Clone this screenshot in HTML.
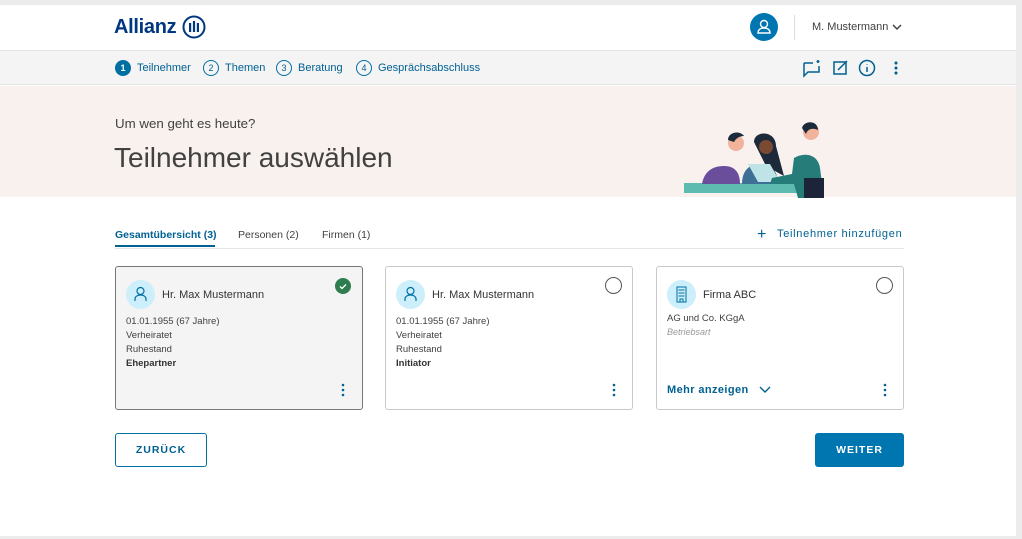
<!DOCTYPE html><html><head><meta charset="utf-8"><style>
*{margin:0;padding:0;box-sizing:border-box}
body{width:1022px;height:539px;background:#ececec;font-family:"Liberation Sans",sans-serif;position:relative;overflow:hidden;color:#333}
.a{position:absolute}
.t{position:absolute;white-space:nowrap;line-height:1}
.card{position:absolute;top:266px;height:144px;width:248px;border:1px solid #c9c9c9;border-radius:3px;background:#fff}
.av{position:absolute;left:10px;top:13px;width:29px;height:29px;border-radius:50%;background:#cdeefb}
.sm{font-size:9.5px;color:#414141}
.blue{color:#006192}
.btn{display:flex;align-items:center;justify-content:center;font-size:10.5px;font-weight:bold;letter-spacing:1px;border-radius:3px}
</style></head><body>
<div class="a" style="left:0;top:5px;width:1016px;height:531px;background:#fff"></div>
<div class="a" style="left:0;top:50px;width:1016px;height:35px;background:#f4f4f4;border-top:1px solid #e2e2e2;border-bottom:1px solid #e2e2e2"></div>
<div class="a" style="left:0;top:86px;width:1016px;height:111px;background:#f8f1ee"></div>
<div class="t" style="left:114px;top:17px;font-size:20px;font-weight:bold;color:#003781;letter-spacing:-0.3px">Allianz</div>
<svg class="a" style="left:182px;top:15px" width="24" height="24" viewBox="0 0 24 24"><circle cx="12" cy="12" r="10.5" fill="none" stroke="#003781" stroke-width="2"/><rect x="7" y="8" width="2.2" height="9" fill="#003781"/><rect x="10.9" y="6" width="2.2" height="11" fill="#003781"/><rect x="14.8" y="8" width="2.2" height="9" fill="#003781"/></svg>
<div class="a" style="left:750px;top:13px;width:28px;height:28px;border-radius:50%;background:#0076b0"></div>
<svg class="a" style="left:750px;top:13px" width="28" height="28"><circle cx="14" cy="11" r="3.5" fill="none" stroke="#fff" stroke-width="1.4"/><path d="M8 20c0-3.5 2.7-5 6-5s6 1.5 6 5z" fill="none" stroke="#fff" stroke-width="1.4"/></svg>
<div class="a" style="left:794px;top:15px;width:1px;height:25px;background:#ddd"></div>
<div class="t" style="left:812px;top:22px;font-size:11px;color:#414141">M. Mustermann</div>
<svg class="a" style="left:892px;top:23px" width="10" height="8"><path d="M1 2l4 4 4-4" fill="none" stroke="#414141" stroke-width="1.5"/></svg>
<!-- steps -->
<div class="a" style="left:115px;top:60px;width:16px;height:16px;border-radius:50%;background:#0070a3;color:#fff;font-size:9px;font-weight:bold;text-align:center;line-height:16px">1</div>
<div class="t blue" style="left:137px;top:63px;font-size:11px">Teilnehmer</div>
<div class="a blue" style="left:203px;top:60px;width:16px;height:16px;border-radius:50%;border:1.3px solid #0070a3;font-size:9px;text-align:center;line-height:14px">2</div>
<div class="t blue" style="left:225px;top:63px;font-size:11px">Themen</div>
<div class="a blue" style="left:276px;top:60px;width:16px;height:16px;border-radius:50%;border:1.3px solid #0070a3;font-size:9px;text-align:center;line-height:14px">3</div>
<div class="t blue" style="left:298px;top:63px;font-size:11px">Beratung</div>
<div class="a blue" style="left:356px;top:60px;width:16px;height:16px;border-radius:50%;border:1.3px solid #0070a3;font-size:9px;text-align:center;line-height:14px">4</div>
<div class="t blue" style="left:378px;top:63px;font-size:11px">Gesprächsabschluss</div>
<svg class="a" style="left:802px;top:59px" width="100" height="20" fill="none" stroke="#006192" stroke-width="1.5"><path d="M2 4h9M16 4v-3M14.5 2.5h3M17 7v6H6l-4 4V4"/><rect x="32" y="3" width="12" height="12"/><path d="M36 11l9-9"/><circle cx="65" cy="9" r="7.5"/><path d="M65 8v5M65 5v0.5"/><circle cx="94" cy="4" r="0.8" fill="#006192"/><circle cx="94" cy="9" r="0.8" fill="#006192"/><circle cx="94" cy="14" r="0.8" fill="#006192"/></svg>
<!-- hero -->
<div class="t" style="left:115px;top:117px;font-size:13.3px;color:#414141">Um wen geht es heute?</div>
<div class="t" style="left:114px;top:144px;font-size:28px;color:#414141">Teilnehmer auswählen</div>
<svg class="a" style="left:684px;top:118px" width="160" height="80">
<rect x="0" y="65" width="136" height="10" fill="#5dbbb0" transform="skewX(-10)"/>
<path d="M18 66c2-12 10-18 22-18s16 8 16 18z" fill="#6b4e9b"/>
<circle cx="52" cy="25" r="8" fill="#f1b39b"/><path d="M44 22c0-8 12-10 16-4-4 0-8 2-10 6z" fill="#1c2a3a"/>
<path d="M58 66c0-12 6-20 18-20s18 8 18 20z" fill="#3e6f94"/>
<path d="M70 24c0-12 22-12 22 4l8 30-18-10z" fill="#1c2a3a"/><circle cx="82" cy="29" r="7" fill="#7a4a32"/>
<path d="M64 46l10 18h22l-10-18z" fill="#bfe3e6"/>
<path d="M110 40c10-6 24-4 26 10l4 30h-26l-4-14-24 0 2-6 20-4z" fill="#257c78"/>
<path d="M120 60h20v22h-20z" fill="#1b2438"/>
<circle cx="127" cy="14" r="8" fill="#f1b39b"/><path d="M118 10c2-8 16-8 16 2-4-2-10-2-12 4z" fill="#1c2a3a"/>
</svg>
<!-- tabs -->
<div class="t blue" style="left:115px;top:230px;font-size:10.5px;font-weight:bold">Gesamtübersicht (3)</div>
<div class="a" style="left:115px;top:245px;width:100px;height:2px;background:#006192"></div>
<div class="t" style="left:238px;top:230px;font-size:10.5px;color:#414141">Personen (2)</div>
<div class="t" style="left:322px;top:230px;font-size:10.5px;color:#414141">Firmen (1)</div>
<div class="a" style="left:115px;top:248px;width:789px;height:1px;background:#e5e5e5"></div>
<div class="t blue" style="left:757px;top:227px;font-size:16px">+</div>
<div class="t blue" style="left:777px;top:229px;font-size:11px;letter-spacing:0.7px">Teilnehmer hinzufügen</div>
<!-- cards -->
<div class="card" style="left:115px;background:#f4f4f4;border-color:#777">
<div class="av"></div><svg class="a" style="left:10px;top:13px" width="29" height="29" fill="none" stroke="#0070a3" stroke-width="1.2"><circle cx="14.5" cy="11" r="3.5"/><path d="M9 21v-2c0-2.5 2.5-4 5.5-4s5.5 1.5 5.5 4v2"/></svg>
<div class="t" style="left:46px;top:23px;font-size:11px">Hr. Max Mustermann</div>
<div class="a" style="left:219px;top:11px;width:16px;height:16px;border-radius:50%;background:#2e7d4f"></div>
<svg class="a" style="left:219px;top:11px" width="16" height="16"><path d="M5 8.5l2 2 4-4" fill="none" stroke="#fff" stroke-width="1.3"/></svg>
<div class="t sm" style="left:10px;top:50px">01.01.1955 (67 Jahre)</div>
<div class="t sm" style="left:10px;top:64px">Verheiratet</div>
<div class="t sm" style="left:10px;top:78px">Ruhestand</div>
<div class="t sm" style="left:10px;top:92px;font-weight:bold;color:#333">Ehepartner</div>
<svg class="a" style="left:224px;top:116px" width="6" height="14" fill="#006192"><circle cx="3" cy="2" r="1.3"/><circle cx="3" cy="7" r="1.3"/><circle cx="3" cy="12" r="1.3"/></svg>
</div>
<div class="card" style="left:385px">
<div class="av"></div><svg class="a" style="left:10px;top:13px" width="29" height="29" fill="none" stroke="#0070a3" stroke-width="1.2"><circle cx="14.5" cy="11" r="3.5"/><path d="M9 21v-2c0-2.5 2.5-4 5.5-4s5.5 1.5 5.5 4v2"/></svg>
<div class="t" style="left:46px;top:23px;font-size:11px">Hr. Max Mustermann</div>
<div class="a" style="left:219px;top:10px;width:17px;height:17px;border-radius:50%;border:1.2px solid #555"></div>
<div class="t sm" style="left:10px;top:50px">01.01.1955 (67 Jahre)</div>
<div class="t sm" style="left:10px;top:64px">Verheiratet</div>
<div class="t sm" style="left:10px;top:78px">Ruhestand</div>
<div class="t sm" style="left:10px;top:92px;font-weight:bold;color:#333">Initiator</div>
<svg class="a" style="left:225px;top:116px" width="6" height="14" fill="#006192"><circle cx="3" cy="2" r="1.3"/><circle cx="3" cy="7" r="1.3"/><circle cx="3" cy="12" r="1.3"/></svg>
</div>
<div class="card" style="left:656px">
<div class="av"></div><svg class="a" style="left:10px;top:13px" width="29" height="29" fill="none" stroke="#0070a3" stroke-width="1"><rect x="10" y="7" width="9" height="15"/><path d="M11.5 10h6M11.5 13h6M11.5 16h6M13 22v-3h3v3"/></svg>
<div class="t" style="left:46px;top:23px;font-size:11px">Firma ABC</div>
<div class="a" style="left:219px;top:10px;width:17px;height:17px;border-radius:50%;border:1.2px solid #555"></div>
<div class="t sm" style="left:10px;top:47px">AG und Co. KGgA</div>
<div class="t sm" style="left:10px;top:61px;font-style:italic;color:#999;font-size:9px">Betriebsart</div>
<div class="t blue" style="left:10px;top:118px;font-size:11px;font-weight:bold;letter-spacing:0.4px">Mehr anzeigen</div>
<svg class="a" style="left:102px;top:118px" width="12" height="9"><path d="M1 2l5 5 5-5" fill="none" stroke="#006192" stroke-width="1.4"/></svg>
<svg class="a" style="left:225px;top:116px" width="6" height="14" fill="#006192"><circle cx="3" cy="2" r="1.3"/><circle cx="3" cy="7" r="1.3"/><circle cx="3" cy="12" r="1.3"/></svg>
</div>
<div class="a blue btn" style="left:115px;top:433px;width:92px;height:34px;border:1.3px solid #0070a3">ZURÜCK</div>
<div class="a btn" style="left:815px;top:433px;width:89px;height:34px;background:#0076b0;color:#fff">WEITER</div>
</body></html>
